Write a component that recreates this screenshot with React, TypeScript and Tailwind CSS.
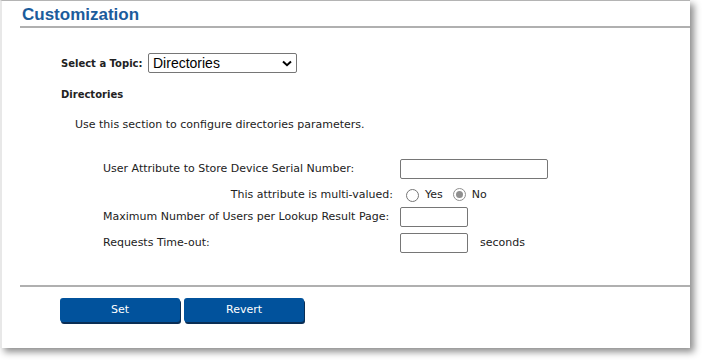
import React from "react";

function Radio({ checked }: { checked?: boolean }) {
  return checked ? (
    <span className="inline-flex w-[13px] h-[13px] rounded-full border border-[#8f8f8f] bg-white items-center justify-center">
      <span className="w-[7px] h-[7px] rounded-full bg-[#8f8f8f]" />
    </span>
  ) : (
    <span className="inline-block w-[13px] h-[13px] rounded-full border border-[#767676] bg-white" />
  );
}

function TextBox({ w }: { w: string }) {
  return <div className={`${w} h-[20px] border border-[#767676] rounded-[2px] bg-white`} />;
}

export default function App() {
  const font = { fontFamily: '"DejaVu Sans", Verdana, sans-serif' };
  return (
    <div className="w-[706px] h-[364px] bg-white overflow-hidden">
      <div
        className="w-[690px] h-[348px] bg-white border-t border-t-[#b4b4b4] border-l-2 border-l-[#e8e8e8] shadow-[4px_4px_7px_rgba(0,0,0,0.45)] flex flex-col text-[11px] text-[#222]"
        style={font}
      >
        <div className="ml-[18px] h-[27px] border-b-2 border-b-[#b0b0b0] flex items-start">
          <h1
            className="text-[17px] leading-[20px] font-bold text-[#1b5c9c] mt-[4px] ml-[2px]"
            style={{ fontFamily: '"Liberation Sans", Arial, sans-serif' }}
          >
            Customization
          </h1>
        </div>

        <div className="ml-[59px] mt-[25px] flex items-center h-[20px]">
          <span className="font-bold text-[10px] w-[87px] whitespace-nowrap">Select a Topic:</span>
          <div className="w-[149px] h-[20px] border border-[#767676] rounded-[2px] flex items-center justify-between pl-[4px] pr-[4px]">
            <span className="text-[14px] text-black" style={{ fontFamily: '"Liberation Sans", Arial, sans-serif' }}>
              Directories
            </span>
            <svg width="10" height="7" viewBox="0 0 10 7">
              <path d="M1 1.5 L5 5.2 L9 1.5" fill="none" stroke="#000" strokeWidth="2" />
            </svg>
          </div>
        </div>

        <div className="ml-[59px] mt-[15px] font-bold text-[10px] leading-[14px]">Directories</div>

        <div className="ml-[73px] mt-[16px] leading-[14px]">Use this section to configure directories parameters.</div>

        <div className="ml-[101px] mt-[27px] flex flex-col">
          <div className="flex items-center h-[20px]">
            <span className="w-[297px]">User Attribute to Store Device Serial Number:</span>
            <TextBox w="w-[148px]" />
          </div>
          <div className="flex items-center h-[20px] mt-[6px]">
            <span className="w-[290px] text-right">This attribute is multi-valued:</span>
            <span className="ml-[13px] flex items-center">
              <Radio />
              <span className="ml-[6px]">Yes</span>
              <span className="ml-[10px]"><Radio checked /></span>
              <span className="ml-[6px]">No</span>
            </span>
          </div>
          <div className="flex items-center h-[20px] mt-[2px]">
            <span className="w-[297px]">Maximum Number of Users per Lookup Result Page:</span>
            <TextBox w="w-[68px]" />
          </div>
          <div className="flex items-center h-[20px] mt-[6px]">
            <span className="w-[297px]">Requests Time-out:</span>
            <TextBox w="w-[68px]" />
            <span className="ml-[12px]">seconds</span>
          </div>
        </div>

        <div className="ml-[18px] mt-[32px] border-t-2 border-t-[#b0b0b0]" />

        <div className="ml-[58px] mt-[11px] flex gap-[4px]">
          <button className="w-[120px] h-[24px] rounded-[3px] bg-[#01529c] text-white text-[11px] shadow-[1px_2px_0_#0a2e55]">
            Set
          </button>
          <button className="w-[120px] h-[24px] rounded-[3px] bg-[#01529c] text-white text-[11px] shadow-[1px_2px_0_#0a2e55]">
            Revert
          </button>
        </div>
      </div>
    </div>
  );
}
